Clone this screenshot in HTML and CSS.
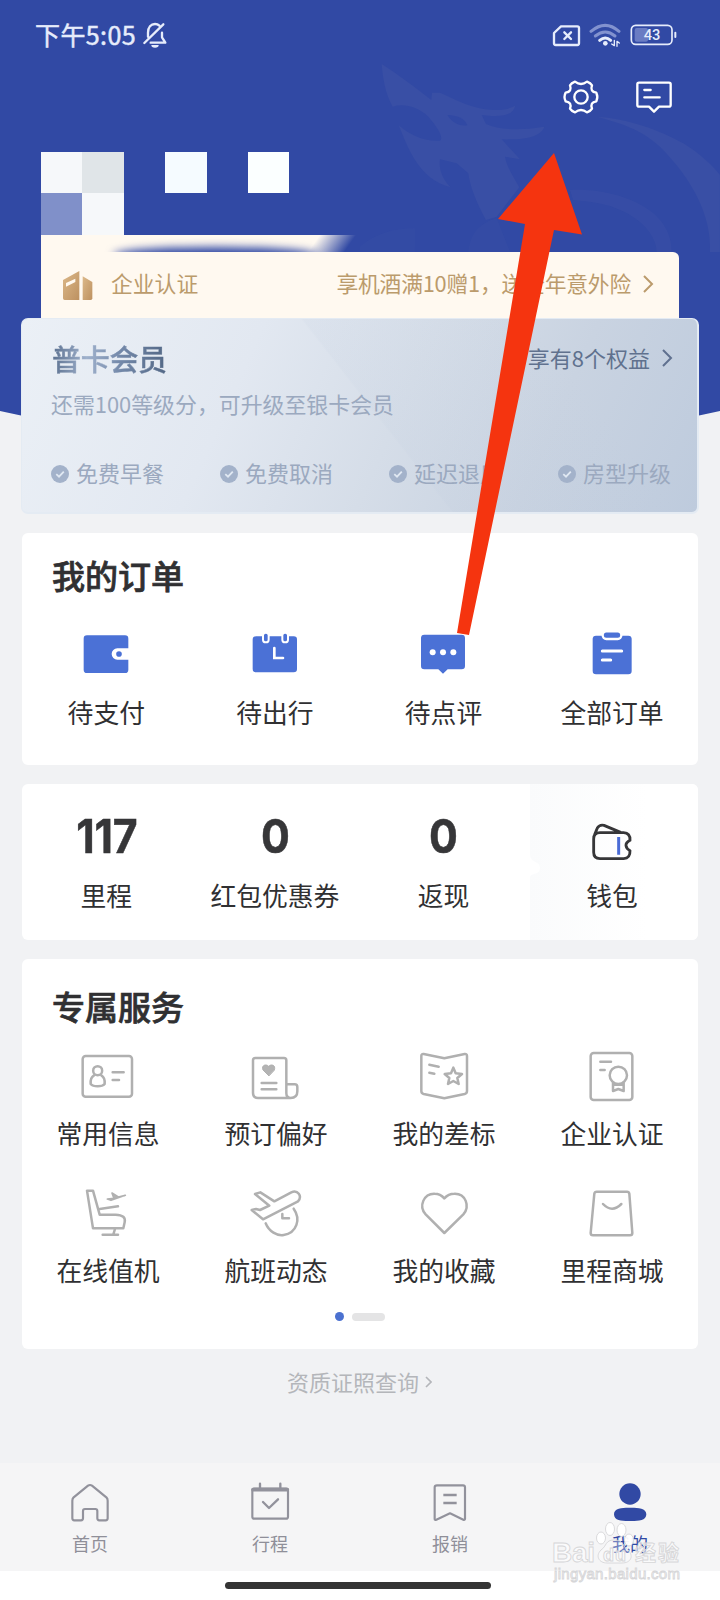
FILE: index.html
```html
<!DOCTYPE html>
<html lang="zh-CN">
<head>
<meta charset="utf-8">
<title>我的</title>
<link rel="stylesheet" href="styles.css">
</head>
<body>
<div class="phone">
  <svg class="backdrop" width="720" height="440" viewBox="0 0 720 440">
    <path d="M0 0H720V411Q540 452 360 452T0 411Z" fill="#3149a4"/>
    <g transform="translate(360 0) scale(.3333)" fill="#394fa5">
      <path d="M65 192C110 220 165 262 214 300L216 278L240 278C290 300 330 325 400 330C430 332 450 325 466 317C460 340 440 350 395 348L365 345L378 372C420 390 480 392 553 380C545 405 510 420 425 418L480 478L435 470C440 500 460 530 478 562L410 650L378 660C350 610 330 560 325 520L290 490L240 478C235 510 250 540 272 562C225 550 190 520 165 480C145 450 130 410 116 376C150 405 190 425 240 422C250 415 240 390 205 350C170 318 130 310 98 320C75 280 68 230 65 192Z"/>
      <path d="M262 345C290 345 315 355 322 376C295 380 275 365 262 345Z" fill="#3149a4"/>
      <path d="M712 350C800 355 900 390 970 430C1020 460 1060 500 1080 525V756H1050C1055 650 1000 540 900 440C840 385 780 370 712 350Z"/>
      <path d="M630 570C720 565 820 590 880 640C920 675 935 715 935 756H890C890 690 810 620 690 605L640 600Z" opacity=".7"/>
      <path d="M0 740C50 700 100 685 165 685V756H0Z" opacity=".35"/>
      <path d="M325 756C330 700 360 670 410 655L450 756Z" opacity=".4"/>
    </g>
  </svg>

  <header class="status">
    <span class="time">下午5:05</span>
    <svg class="bell" viewBox="420 60 90 90" fill="none" stroke="#e6ecfb" stroke-width="7" stroke-linecap="round" stroke-linejoin="round">
      <path d="M444 110V98C444 82 453 72 465 72C470 72 475 74 478 77M486 98V112L496 128H452M433 129L490 73"/>
      <path d="M454 135H476A11 8 0 0 1 454 135Z" fill="#e6ecfb" stroke="none"/>
    </svg>
    <svg class="signals" viewBox="570 60 390 90" fill="none" stroke="#e6ecfb" stroke-linecap="round" stroke-linejoin="round">
      <path d="M603 79H652Q657 79 657 84V130Q657 135 652 135H587Q582 135 582 130V99Z" stroke-width="7"/>
      <path d="M613 97L633 117M633 97L613 117" stroke-width="7"/>
      <path d="M693 94Q736 58 777 94" stroke="#8292cf" stroke-width="9"/>
      <path d="M706 108Q736 84 765 108" stroke="#8292cf" stroke-width="9"/>
      <path d="M719 121Q736 107 752 121" stroke-width="9"/>
      <circle cx="736" cy="130" r="7" fill="#e6ecfb" stroke="none"/>
      <path d="M763 121V137L755 132M771 139V124L778 129" stroke-width="4"/>
      <rect x="824" y="84" width="40" height="41" rx="6" fill="#6a7cc3" stroke="none"/>
      <rect x="814" y="76" width="122" height="57" rx="13" stroke-width="5"/>
      <path d="M946 98V111" stroke-width="6"/>
      <text class="battery" x="876" y="121" text-anchor="middle">43</text>
    </svg>
  </header>

  <div class="tools">
    <svg class="icon" viewBox="578 208 168 168" fill="none" stroke="#fff" stroke-width="7" stroke-linejoin="round">
      <path d="M644 246Q662 260 680 246Q691 250 695 257Q688 276 708 279Q714 292 708 305Q688 308 695 327Q691 334 680 338Q662 324 644 338Q633 334 629 327Q636 308 616 305Q609 292 616 279Q636 276 629 257Q633 250 644 246Z"/>
      <circle cx="662" cy="292" r="20"/>
    </svg>
    <svg class="icon" viewBox="798 208 168 168" fill="none" stroke="#fff" stroke-width="7" stroke-linejoin="round" stroke-linecap="round">
      <path d="M837 249H927Q932 249 932 254V316Q932 321 927 321H897L882 336L867 321H837Q832 321 832 316V254Q832 249 837 249ZM853 271H872M853 293H899"/>
    </svg>
  </div>

  <div class="mosaic">
    <i class="m1"></i><i class="m2"></i><i></i><i class="m3"></i><i></i><i class="m4"></i>
    <i class="m5"></i><i class="m6"></i>
  </div>
  <div class="strip"><div class="shade"></div></div>

  <div class="company">
    <svg class="building" viewBox="183 145 99 99">
      <defs><linearGradient id="gold" x1="0" y1="0" x2="1" y2="1"><stop offset="0" stop-color="#dcb98a"/><stop offset="1" stop-color="#bd9160"/></linearGradient></defs>
      <path d="M189 178L238 151V238H194Q189 238 189 233ZM198 187V198L226 184V174Z" fill="url(#gold)" fill-rule="evenodd"/>
      <path d="M248 167L277 184V233Q277 238 272 238H248Z" fill="url(#gold)"/>
    </svg>
    <span class="c-name">企业认证</span>
    <span class="c-offer">享机酒满10赠1，送全年意外险</span>
    <svg class="chev" viewBox="0 0 10 18"><path d="M1 1L9 9L1 17"/></svg>
  </div>

  <section class="member">
    <div class="m-top">
      <h2>普卡会员</h2>
      <span class="rights">享有8个权益</span>
      <svg class="chev dark" viewBox="0 0 10 18"><path d="M1 1L9 9L1 17"/></svg>
    </div>
    <p>还需100等级分，可升级至银卡会员</p>
    <ul>
      <li><svg viewBox="0 0 18 18"><circle cx="9" cy="9" r="9"/><path d="M5.3 9.2L8 11.7L12.8 6.7"/></svg>免费早餐</li>
      <li><svg viewBox="0 0 18 18"><circle cx="9" cy="9" r="9"/><path d="M5.3 9.2L8 11.7L12.8 6.7"/></svg>免费取消</li>
      <li><svg viewBox="0 0 18 18"><circle cx="9" cy="9" r="9"/><path d="M5.3 9.2L8 11.7L12.8 6.7"/></svg>延迟退房</li>
      <li><svg viewBox="0 0 18 18"><circle cx="9" cy="9" r="9"/><path d="M5.3 9.2L8 11.7L12.8 6.7"/></svg>房型升级</li>
    </ul>
  </section>

  <section class="card orders">
    <h3>我的订单</h3>
    <div class="row">
      <div class="cell">
        <svg class="icon solid" viewBox="235 290 168 168"><path d="M262 318H376Q386 318 386 328V357H353A17 17 0 0 0 353 391H386V421Q386 431 376 431H262Q252 431 252 421V328Q252 318 262 318Z"/><circle cx="358" cy="374" r="8.5"/></svg>
        <span>待支付</span>
      </div>
      <div class="cell">
        <svg class="icon solid" viewBox="740 290 168 168"><rect x="757" y="321" width="133" height="108" rx="10"/><g stroke="#fff" stroke-width="6"><rect x="788" y="310" width="17" height="29" rx="8"/><rect x="846" y="310" width="17" height="29" rx="8"/></g><path d="M822 356V386H848" fill="none" stroke="#fff" stroke-width="8" stroke-linecap="round"/></svg>
        <span>待出行</span>
      </div>
      <div class="cell">
        <svg class="icon solid" viewBox="165 290 168 168"><path d="M193 316H305Q315 316 315 326V410Q315 420 305 420H263L249 433L235 420H193Q183 420 183 410V326Q183 316 193 316Z"/><g fill="#fff"><circle cx="218" cy="369" r="9"/><circle cx="249" cy="369" r="9"/><circle cx="280" cy="369" r="9"/></g></svg>
        <span>待点评</span>
      </div>
      <div class="cell">
        <svg class="icon solid" viewBox="673 290 168 168"><rect x="699" y="319" width="117" height="116" rx="10"/><rect x="729" y="306" width="56" height="23" rx="11" stroke="#fff" stroke-width="7"/><path d="M728 365H786M728 392H753" stroke="#fff" stroke-width="9" stroke-linecap="round"/></svg>
        <span>全部订单</span>
      </div>
    </div>
  </section>

  <section class="card stats">
    <svg class="panel" width="168" height="156" viewBox="0 0 168 156"><defs><linearGradient id="fade"><stop offset="0" stop-color="#fafbfc"/><stop offset=".7" stop-color="#fff"/></linearGradient></defs><path d="M0 0H168V156H0V94C0 88 10 92 10 84S0 80 0 70Z" fill="url(#fade)"/></svg>
    <div class="row">
      <div class="cell"><b>117</b><span>里程</span></div>
      <div class="cell"><b>0</b><span>红包优惠券</span></div>
      <div class="cell"><b>0</b><span>返现</span></div>
      <div class="cell">
        <svg class="icon" viewBox="671 111 168 168" fill="none" stroke="#363638" stroke-width="8.5" stroke-linejoin="round"><path d="M719 185H790Q810 186 809 208Q796 215 797 224Q798 233 809 239Q810 262 790 263H719Q700 263 700 244V204Q700 185 719 185ZM702 193L711 171Q718 160 731 163L781 184"/><path d="M775 198V251" stroke="#4a6bd6" stroke-width="9"/></svg>
        <span>钱包</span>
      </div>
    </div>
  </section>

  <section class="card services">
    <h3>专属服务</h3>
    <div class="grid">
      <div class="cell">
        <svg class="icon line" viewBox="241 294 168 168"><rect x="249" y="318" width="148" height="122" rx="9"/><circle cx="294" cy="362" r="13.5"/><path d="M283 376C273 382 272 391 273 402Q279 409 294 409T315 402C316 391 315 382 305 376M339 367H372M339 390H358"/></svg>
        <span>常用信息</span>
      </div>
      <div class="cell">
        <svg class="icon line" viewBox="745 294 168 168"><path d="M860 403V331Q860 324 853 324H767Q760 324 760 331V429Q760 444 775 444H873Q893 444 893 424V411Q893 403 885 403H860V430Q860 444 874 444M786 399H830M786 418H830"/><path d="M807 377L790 360C784 345 800 341 807 349C814 341 830 345 824 360Z" fill="#b3b3b3" stroke-width="3"/></svg>
        <span>预订偏好</span>
      </div>
      <div class="cell">
        <svg class="icon line" viewBox="168 294 168 168"><path d="M191 312L253 325L314 312Q321 311 321 318V423Q321 430 314 432L253 445L191 432Q184 430 184 423V318Q184 311 191 312ZM208 344L236 350M208 368L223 371"/><path d="M280 353L287 370L306 372L292 384L296 402L280 393L264 402L268 384L254 372L273 370Z"/></svg>
        <span>我的差标</span>
      </div>
      <div class="cell">
        <svg class="icon line" viewBox="672 294 168 168"><rect x="692" y="309" width="125" height="141" rx="9"/><circle cx="775" cy="376" r="26"/><path d="M759 399V423L775 417L791 423V399M759 404H791M721 335H753M721 360H734"/></svg>
        <span>企业认证</span>
      </div>
      <div class="cell">
        <svg class="icon line" viewBox="241 706 168 168"><path d="M262 723H280L300 795H348Q380 796 375 818L371 836H280ZM300 778L355 770M346 838L341 854M309 855H355"/><path d="M323 748L343 746L337 730L356 742L377 737L334 752Z" stroke-width="5" fill="#b3b3b3"/></svg>
        <span>在线值机</span>
      </div>
      <div class="cell">
        <svg class="icon line" viewBox="745 706 168 168"><path d="M766 733L782 728L824 755L875 728C894 720 909 739 895 755L790 809L756 781L769 778L781 781L809 768Z"/><path d="M798 821C808 846 832 859 852 856C892 850 904 808 882 777M848 793V806H868"/></svg>
        <span>航班动态</span>
      </div>
      <div class="cell">
        <svg class="icon line" viewBox="168 706 168 168"><path d="M253 850L197 794C175 770 191 731 224 732C238 732 247 739 253 746C259 739 270 732 283 732C317 731 331 770 310 794Z"/></svg>
        <span>我的收藏</span>
      </div>
      <div class="cell">
        <svg class="icon line" viewBox="672 706 168 168"><path d="M710 726H801Q807 726 808 732L817 850Q817 857 810 857H699Q692 857 692 850L703 732Q704 726 710 726ZM729 763Q756 791 784 763"/></svg>
        <span>里程商城</span>
      </div>
    </div>
    <div class="pager"><i class="on"></i><i class="off"></i></div>
  </section>

  <div class="license">资质证照查询<svg viewBox="0 0 7 12"><path d="M1 1L6 6L1 11"/></svg></div>

  <nav class="tabs">
    <div class="tab">
      <svg viewBox="188 109 162 162"><path d="M263 138Q269 134 275 138L318 173Q322 177 322 183V236Q322 242 316 242H297Q291 242 291 236V214Q291 208 285 208H254Q248 208 248 214V236Q248 242 242 242H222Q216 242 216 236V183Q216 177 220 173Z"/></svg>
      <span>首页</span>
    </div>
    <div class="tab">
      <svg viewBox="728 109 162 162"><rect x="756" y="147" width="107" height="90" rx="6"/><path d="M758 150H861" stroke-width="11"/><path d="M779 132V145M840 132V145M788 187L806 205L833 179" stroke-width="7"/></svg>
      <span>行程</span>
    </div>
    <div class="tab">
      <svg viewBox="188 109 162 162"><path d="M230 137H308Q314 137 314 143V238Q313 242 309 240L269 221L228 240Q223 242 223 238V143Q223 137 230 137Z"/><path d="M249 166H289M249 190H289" stroke-width="8" stroke-linecap="butt"/></svg>
      <span>报销</span>
    </div>
    <div class="tab active">
      <svg viewBox="728 109 162 162"><circle cx="809" cy="163" r="32"/><path d="M761 224C761 203 790 204 809 204S858 203 858 224S830 244 809 244S761 245 761 224Z"/></svg>
      <span>我的</span>
    </div>
  </nav>
  <footer class="gesture"><i></i></footer>

  <svg class="pointer" width="130" height="490" viewBox="455 150 130 490"><path d="M554 153L582 234.5L554 230L469 635L457 633L525 224L498 219Z" fill="#f5340f"/></svg>

  <svg class="watermark" width="136" height="66" viewBox="550 1520 136 66">
    <g fill="#fff" fill-opacity=".6" stroke="#d6d6d8" stroke-width=".9">
      <g fill-opacity=".95"><ellipse cx="601" cy="1538" rx="4.5" ry="6"/><ellipse cx="610" cy="1529" rx="4.5" ry="6.5"/><ellipse cx="621.5" cy="1530" rx="4.5" ry="6.5"/><ellipse cx="629" cy="1540" rx="4.5" ry="6"/></g>
      <path d="M614 1540C605 1540 607 1546 601 1550C595 1556 599 1563 607 1563H622C631 1563 634 1556 628 1550C622 1546 624 1540 614 1540Z" fill-opacity=".3"/>
      <text class="wm-big" x="552" y="1562" textLength="43">Bai</text>
      <text class="wm-du" x="603" y="1561" textLength="23">du</text>
      <text class="wm-cn" x="635" y="1560" textLength="44">经验</text>
      <text class="wm-url" x="554" y="1579" textLength="126">jingyan.baidu.com</text>
    </g>
  </svg>
</div>
</body>
</html>
```

FILE: styles.css
```css
* { box-sizing: border-box; }
body { margin: 0; }
h2, h3, p, ul { margin: 0; padding: 0; font-weight: 400; }
i { display: block; font-style: normal; }
svg { display: block; flex: none; }

.phone {
  position: relative;
  width: 720px;
  height: 1600px;
  overflow: hidden;
  display: flex;
  flex-direction: column;
  background: #f1f2f4;
  color: #303032;
  font-family: "Noto Sans CJK SC", sans-serif;
}
.phone > * { flex: none; }
.backdrop { position: absolute; left: 0; top: 0; }
.status, .tools, .mosaic, .strip, .company, .member { position: relative; }

.status { height: 69px; padding: 20px 40px 0 35px; display: flex; align-items: flex-start; }
.time { font-size: 25px; line-height: 28px; letter-spacing: .4px; color: #e6ecfb; -webkit-text-stroke: .5px #e6ecfb; white-space: nowrap; width: 105px; }
.bell { width: 30px; height: 30px; }
.signals { width: 130px; height: 30px; margin-left: auto; }
.battery { font: 500 44px Roboto, sans-serif; fill: #e6ecfb; stroke: none; }

.icon { width: 56px; height: 56px; }
.tools { height: 83px; padding-right: 38px; display: flex; justify-content: flex-end; gap: 17px; }

.mosaic {
  height: 83px;
  margin-left: 41px;
  display: grid;
  grid-template-columns: repeat(6, 41.4px);
  grid-template-rows: 41px 42px;
}
.m1, .m6 { background: #f6f8fa; }
.m2 { background: #e0e5e8; }
.m3 { background: #f5fbff; }
.m4 { background: #fbffff; }
.m5 { background: #8090c9; }

.strip {
  height: 17px;
  margin-left: 41px;
  width: 320px;
  overflow: hidden;
  background: linear-gradient(125deg, #fff9f0 0 84%, #fff9f000 95%);
}
.shade { width: 205px; height: 16px; margin: 12px 0 0 72px; border-radius: 50%; background: #3149a4; filter: blur(4px); }

.company {
  height: 66px;
  margin: 0 41px;
  padding: 0 26px 0 20px;
  display: flex;
  align-items: center;
  border-radius: 0 6px 0 0;
  background: #fff9f0;
  color: #bb9b6c;
  font-size: 21.8px;
  line-height: 32px;
  white-space: nowrap;
}
.building { width: 33px; height: 33px; }
.c-name { margin: -4px 0 0 17px; }
.c-offer { margin: -4px 12px 0 auto; letter-spacing: -.22px; }
.chev { width: 10px; height: 18px; fill: none; stroke: #bb9b6c; stroke-width: 2; overflow: visible; }
.company .chev { margin-top: -2px; }
.chev.dark { stroke: #5f708f; }

.member {
  height: 196px;
  margin: 0 21px;
  padding: 18px 17px 0 30px;
  border-radius: 7px;
  border: 1px solid #e4ebf3;
  border-width: 1px 2px 2px 1px;
  background:
    linear-gradient(52deg, #fff0 0 52%, #b8c6da18 52.3%, #fff0 80%),
    linear-gradient(114deg, #ebf0f6 0%, #e2e8f1 32%, #d5dde8 55%, #c9d3e1 76%, #becbdd 100%);
}
.m-top { display: flex; align-items: center; height: 42px; padding-right: 8px; }
.member h2 {
  font-size: 29px;
  line-height: 42px;
  font-weight: 500;
  margin-right: auto;
  letter-spacing: -.3px;
  color: transparent;
  -webkit-text-stroke: .4px transparent;
  background: linear-gradient(90deg, #5c7190, #9fb1cc 30%, #7388a9 60%, #536886);
  -webkit-background-clip: text;
  background-clip: text;
}
.rights { font-size: 22px; line-height: 32px; color: #60718e; margin: -3px 12px 0 0; }
.member p { font-size: 21.9px; line-height: 32px; margin-top: 9px; margin-left: -1px; color: #9ba9bf; white-space: nowrap; }
.member ul { display: flex; list-style: none; margin-top: 37px; margin-left: -1px; }
.member li { flex: 0 0 169px; display: flex; align-items: center; gap: 7px; font-size: 22px; line-height: 30px; height: 30px; color: #9ba9bf; white-space: nowrap; }
.member li svg { width: 18px; height: 18px; margin-top: 3px; fill: #a3b2ca; }
.member li path { fill: none; stroke: #e0e8f2; stroke-width: 1.8; }

.card { position: relative; margin: 19px 22px 0; border-radius: 6px; background: #fff; overflow: hidden; }
.card h3 { font-size: 33px; line-height: 48px; font-weight: 500; padding-left: 30px; white-space: nowrap; -webkit-text-stroke: .7px #303032; }
.row { display: grid; grid-template-columns: repeat(4, 168.6px); position: relative; }
.cell { display: flex; flex-direction: column; align-items: center; }
.cell span { font-size: 25.8px; line-height: 36px; white-space: nowrap; }
.solid { fill: #4b71d6; }
.line { fill: none; stroke: #b0b0b0; stroke-width: 7.5; stroke-linejoin: round; stroke-linecap: round; }

.orders { height: 232px; padding-top: 18px; }
.orders .row { margin-top: 27px; }
.orders .cell { gap: 12px; }

.stats { height: 156px; padding-top: 24px; }
.panel { position: absolute; right: 0; top: 0; }
.stats .cell { gap: 13px; }
.stats b { font: 700 46px/56px Inter, sans-serif; transform: scaleX(.93); letter-spacing: -.3px; color: #363638; -webkit-text-stroke: .5px #363638; }

.services { height: 390px; padding-top: 23px; }
.grid { display: grid; grid-template-columns: repeat(4, 168px); grid-auto-rows: 137px; padding-left: 2px; margin-top: 18px; }
.services .cell { gap: 11px; }
.pager { display: flex; justify-content: center; align-items: center; gap: 8px; margin-top: -10px; height: 9px; }
.on { width: 9px; height: 9px; border-radius: 50%; background: #4b71d0; }
.off { width: 33px; height: 8px; border-radius: 4px; background: #e4e4e5; }

.license { height: 114px; padding: 16px 0 0; display: flex; justify-content: center; align-items: flex-start; gap: 6px; font-size: 22px; line-height: 32px; color: #b4b6ba; }
.license svg { width: 7px; height: 12px; margin: 11px 1px 0 0; fill: none; stroke: #b4b6ba; stroke-width: 1.6; }

.tabs { height: 108px; padding-top: 13px; display: grid; grid-template-columns: repeat(4, 180px); background: #f5f5f6; }
.tab { display: flex; flex-direction: column; align-items: center; color: #8f8f99; }
.tab svg { width: 54px; height: 54px; fill: none; stroke: #92929c; stroke-width: 6.5; stroke-linecap: round; stroke-linejoin: round; }
.tab span { font-size: 18px; line-height: 26px; }
.tab.active { color: #3149a4; }
.tab.active svg { fill: #3149a4; stroke: none; }
.gesture { height: 29px; padding: 11px 0 0 225px; background: #fff; }
.gesture i { width: 266px; height: 7px; border-radius: 4px; background: #343434; }

.pointer { position: absolute; left: 455px; top: 150px; }
.watermark { position: absolute; left: 550px; top: 1520px; }
.wm-big { font: 700 28px "Liberation Sans", sans-serif; }
.wm-du { font: 700 18px "Liberation Sans", sans-serif; }
.wm-cn { font: 700 21px "Noto Sans CJK SC", sans-serif; }
.wm-url { font: 400 15px "Liberation Sans", sans-serif; }
```
